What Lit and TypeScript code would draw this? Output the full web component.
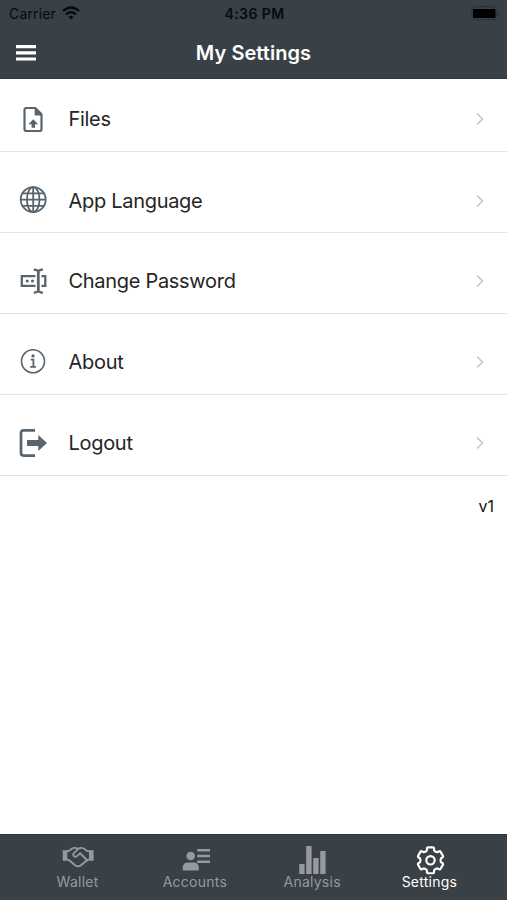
import { LitElement, html, css, svg } from "lit";
import { customElement } from "lit/decorators.js";

const gearPath = (cx: number, cy: number) => {
  const at = (r: number, deg: number) => {
    const a = (deg * Math.PI) / 180;
    return `${(cx + r * Math.cos(a)).toFixed(2)} ${(cy + r * Math.sin(a)).toFixed(2)}`;
  };
  let d = "";
  for (let k = 0; k < 6; k++) {
    const a = -90 + k * 60;
    d += `${k ? "L" : "M"}${at(10.6, a - 20)}L${at(12.6, a - 16)}Q${at(13.3, a - 14)} ${at(13.2, a - 11)}L${at(13.2, a + 11)}Q${at(13.3, a + 14)} ${at(12.6, a + 16)}L${at(10.6, a + 20)}Q${at(9.5, a + 30)} ${at(10.6, a + 40)}`;
  }
  return d + "Z";
};

const rows = [
  {
    label: "Files", cls: "files",
    icon: svg`<path d="M17.200 6.800h8.800l6.200 6.300v14.700a2 2 0 0 1-2 2h-13a2 2 0 0 1-2-2v-19a2 2 0 0 1 2-2z" transform="translate(.3 .2)" fill="none" stroke="currentColor" stroke-width="2.200"/><path d="M25.700 6.500v8h7.500zM24.300 18.300l-4.900 4.900h3.200v3.500h3.400v-3.500h3.200z" fill="currentColor"/>`,
  },
  {
    label: "App Language", cls: "language",
    icon: svg`<g fill="none" stroke="currentColor" stroke-width="1.800"><circle cx="24.200" cy="17.600" r="12.500"/><ellipse cx="24.200" cy="17.600" rx="6.300" ry="12.500"/><path d="M24.200 5.100v25M11.700 17.600h25M13.600 11.400h21.200M13.600 23.800h21.200"/></g>`,
  },
  {
    label: "Change Password", cls: "password",
    icon: svg`<g fill="none" stroke="currentColor"><path d="M26.500 13.200H12.800v9.600h13.700M32.500 13.200h3.800v9.600h-3.800" stroke-width="2.300"/><path d="M29.300 9v18" stroke-width="2.800"/><path d="M24.700 6.700q4.600 0 4.600 2.800q0-2.800 4.600-2.800M24.700 29.600q4.600 0 4.600-2.800q0 2.800 4.600 2.800" stroke-width="2.200"/></g><circle cx="18.200" cy="18" r="1.600" fill="currentColor"/><circle cx="23.500" cy="18" r="1.600" fill="currentColor"/>`,
  },
  {
    label: "About", cls: "about",
    icon: svg`<circle cx="24" cy="17.300" r="11.500" fill="none" stroke="currentColor" stroke-width="1.600"/><circle cx="24" cy="11.900" r="1.600" fill="currentColor"/><path d="M21.700 15.700h2.700v7M21.200 22.900h5.800" fill="none" stroke="currentColor" stroke-width="1.800"/>`,
  },
  {
    label: "Logout", cls: "logout",
    icon: svg`<path d="M26 5.300H14.500a2.500 2.500 0 0 0-2.500 2.500v20.300a2.500 2.500 0 0 0 2.500 2.500H26" fill="none" stroke="currentColor" stroke-width="2.700"/><path d="M18 15h11.300v-5l8.700 8-8.700 8v-5H18z" fill="currentColor"/>`,
  },
];

const tabs = [
  {
    label: "Wallet", cls: "wallet",
    icon: svg`<path d="M4.700 8.300h4.600v10.500H4.700zM31 8.300h4.600v10.500H31z" fill="currentColor"/><path d="M9 9.300q2.500-.2 4.500-2.200 1.500-1.200 3.300-1.200 1.800 0 3.200 1 1.500-1 3.200-1 2 0 3.600 1.400 1.800 2 4.400 2M9 17.500q2 .2 3.500 1.800l4.500 3.900q3 2.300 6 0l5-4.100q1.400-1.500 3-1.600M20.300 6.800l-4.400 4.400q-1.300 1.600 0 2.900 1.500 1.300 3 0l3.200-2.800 6.300 6.200q.8 1 .2 2" fill="none" stroke="currentColor" stroke-width="1.900" stroke-linejoin="round"/>`,
  },
  {
    label: "Accounts", cls: "accounts",
    icon: svg`<circle cx="15.700" cy="14" r="4.300" fill="currentColor"/><path d="M7.800 28.500v-2.700q0-5.300 5.500-5.300h5q5.500 0 5.500 5.300v2.700zM22.200 7H35v2.600H22.200zM22.200 12.700H35v2.600H22.200zM22.200 18.400H35V21H22.200z" fill="currentColor"/>`,
  },
  {
    label: "Analysis", cls: "analysis",
    icon: svg`<path d="M7.200 22h5.400v10H7.200zM14.200 4h5.400v28h-5.400zM21.200 16h5.400v16h-5.400zM28.200 9h5.400v23h-5.400z" fill="currentColor"/>`,
  },
  {
    label: "Settings", cls: "settings",
    icon: svg`<path d="${gearPath(21.5, 18.3)}" fill="none" stroke="currentColor" stroke-width="2.200" stroke-linejoin="round"/><circle cx="21.500" cy="18.300" r="4.200" fill="none" stroke="currentColor" stroke-width="2.200"/>`,
  },
];

@customElement("app-root")
export class AppRoot extends LitElement {
  static styles = css`
    :host { display: flex; flex-direction: column; height: 900px; background: #fff; color: #252525; font-family: Inter, "Liberation Sans", sans-serif; }
    * { box-sizing: border-box; }
    svg { display: block; flex: none; }
    header { height: 79px; background: #394046; border-bottom: 1px solid #30363c; }
    .status { height: 27px; display: grid; grid-template-columns: 1fr auto 1fr; align-items: center; padding: 0 7px 0 9px; color: #080b0e; font-size: 14px; }
    .carrier { display: flex; align-items: center; gap: 6px; letter-spacing: .15px; }
    .carrier svg { margin-top: -2px; }
    .time { font-weight: 600; letter-spacing: .4px; }
    .battery { justify-self: end; }
    .nav { height: 52px; display: grid; grid-template-columns: 1fr auto 1fr; align-items: center; padding: 0 16px; color: #fff; }
    .nav svg { margin-top: -1px; }
    .title { font-size: 20px; font-weight: 600; letter-spacing: .05px; }
    main { flex: 1; }
    .row { height: 65px; margin-top: 16px; border-bottom: 1px solid #e2e2e3; display: flex; align-items: center; }
    .row:first-child { margin-top: 8px; }
    .row:nth-child(2) { height: 64px; margin-top: 17px; border-bottom-width: 1px; }
    .row:nth-child(3) { margin-top: 16px; }
    .row > svg { color: #58656f; margin-left: 9px; }
    .label { flex: 1; margin-left: 11.500px; font-size: 20px; letter-spacing: -.3px; }
    .row > .chevron { color: #c6c6c8; margin-right: 22px; }
    .version { text-align: right; padding: 20px 13px 0; font-size: 16px; line-height: 20px; color: #111; }
    nav { height: 66px; background: #394046; border-top: 1px solid #30363c; display: grid; grid-template-columns: repeat(4, 117.300px); justify-content: center; }
    .tab { display: flex; flex-direction: column; align-items: center; color: #969a9f; font-size: 14px; letter-spacing: .25px; line-height: 16px; padding-top: 7px; }
    .tab span { margin-top: -1px; }
    .tab.settings { color: #fff; }
  `;

  render() {
    return html`
      <header>
        <div class="status">
          <div class="carrier"><span>Carrier</span>
            <svg width="18" height="14" viewBox="0 0 18 14"><g fill="none" stroke="currentColor" stroke-width="2.400"><path d="M1 5q8-7 16 0M4 8.300q5-4.200 10 0"/></g><path d="M6.500 10.700q2.500-2 5 0L9 13.500z" fill="currentColor"/></svg>
          </div>
          <div class="time">4:36 PM</div>
          <svg class="battery" width="29" height="15" viewBox="0 0 29 15"><rect x=".7" y=".7" width="25" height="13" rx="4" fill="none" stroke="#2c3237"/><rect x="2" y="3" width="22.500" height="9" rx="1" fill="#000"/><path d="M27 5.500q2 2 0 4z" fill="#20252a"/></svg>
        </div>
        <div class="nav">
          <svg width="20" height="18" viewBox="0 0 20 18"><path d="M0 1h20v3.200H0zM0 7.200h20v3.200H0zM0 13.400h20v3.200H0z" fill="currentColor"/></svg>
          <div class="title">My Settings</div>
        </div>
      </header>
      <main>
        ${rows.map((r) => html`<div class="row">
          <svg width="48" height="37" viewBox="0 0 48 37">${r.icon}</svg>
          <span class="label ${r.cls}">${r.label}</span>
          <svg class="chevron" width="10" height="14" viewBox="0 0 10 14"><path d="M2 1.500l5.500 5.500L2 12.500" fill="none" stroke="currentColor" stroke-width="1.600"/></svg>
        </div>`)}
        <div class="version">v1</div>
      </main>
      <nav>
        ${tabs.map((t) => html`<div class="tab ${t.cls}">
          <svg width="40" height="33" viewBox="0 0 40 33">${t.icon}</svg>
          <span>${t.label}</span>
        </div>`)}
      </nav>
    `;
  }
}
